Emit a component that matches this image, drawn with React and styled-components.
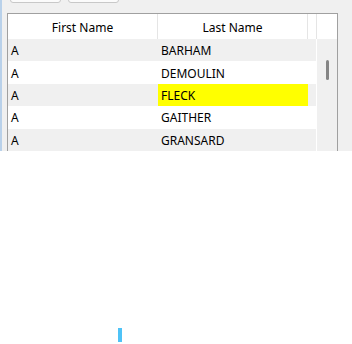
import styled, { createGlobalStyle } from "styled-components";

const GlobalStyle = createGlobalStyle`
  html, body {
    margin: 0;
    padding: 0;
    background: #ffffff;
  }
  body {
    font-family: "Noto Sans", "Open Sans", sans-serif;
    font-size: 12px;
    color: #000;
  }
`

const Panel = styled.div`
  height: 151px;
  background: #f0f0f0;
  border-left: 2px solid #b9d1ea;
  padding-left: 5px;
  box-sizing: border-box;
  display: flex;
  flex-direction: column;
  overflow: hidden;
`

const Toolbar = styled.div`
  height: 13px;
  display: flex;
  align-items: flex-end;
  gap: 7px;
  padding-left: 3px;
  overflow: hidden;
  flex-shrink: 0;
`

const ToolButton = styled.div`
  width: 51px;
  height: 23px;
  margin-bottom: 10px;
  box-sizing: border-box;
  border: 1px solid #c8c8c8;
  border-radius: 3px;
  background: #fbfbfb;
  flex-shrink: 0;
`

const Grid = styled.div`
  width: 331px;
  flex: 1;
  box-sizing: border-box;
  border: 1px solid #a0a0a0;
  border-bottom: none;
  background: #ffffff;
  display: flex;
  flex-direction: column;
  overflow: hidden;
`

const HeaderRow = styled.div`
  height: 25px;
  display: flex;
  background: #ffffff;
  flex-shrink: 0;
`

const HeaderCell = styled.div`
  width: ${(p) => p.$w}px;
  box-sizing: border-box;
  border-right: 1px solid ${(p) => (p.$last ? "transparent" : "#e5e5e5")};
  display: flex;
  align-items: center;
  justify-content: center;
  white-space: nowrap;
  padding-top: 1px;
`

const Body = styled.div`
  display: flex;
  flex: 1;
`

const Rows = styled.div`
  width: 308px;
  display: flex;
  flex-direction: column;
  border-right: 1px solid #ffffff;
`

const Row = styled.div`
  height: 22.4px;
  display: flex;
  flex-shrink: 0;
  background: ${(p) => (p.$alt ? "#f0f0f0" : "#ffffff")};
`

const Cell = styled.div`
  width: ${(p) => p.$w}px;
  box-sizing: border-box;
  padding: 1px 0 0 3px;
  display: flex;
  align-items: center;
  white-space: nowrap;
  background: ${(p) => (p.$highlight ? "#ffff00" : "transparent")};
`

const ScrollTrack = styled.div`
  width: 20px;
  background: #f0f0f0;
  display: flex;
  justify-content: center;
  padding-top: 21px;
  box-sizing: border-box;
`

const ScrollThumb = styled.div`
  width: 3px;
  height: 20px;
  border-radius: 1.5px;
  background: #858585;
`

const Below = styled.div`
  height: 193px;
  padding: 177px 0 0 118px;
  box-sizing: border-box;
`

const Caret = styled.div`
  width: 4px;
  height: 14px;
  background: #4fc3f7;
`

const people = [
  { first: "A", last: "BARHAM" },
  { first: "A", last: "DEMOULIN" },
  { first: "A", last: "FLECK", highlight: true },
  { first: "A", last: "GAITHER" },
  { first: "A", last: "GRANSARD" },
]

export default function App() {
  return (
    <>
      <GlobalStyle />
      <Panel>
        <Toolbar>
          <ToolButton />
          <ToolButton />
        </Toolbar>
        <Grid>
          <HeaderRow>
            <HeaderCell $w={150}>First Name</HeaderCell>
            <HeaderCell $w={150}>Last Name</HeaderCell>
            <HeaderCell $w={9} />
            <HeaderCell $w={20} $last />
          </HeaderRow>
          <Body>
            <Rows>
              {people.map((p, i) => (
                <Row key={i} $alt={i % 2 === 0}>
                  <Cell $w={150}>{p.first}</Cell>
                  <Cell $w={150} $highlight={p.highlight}>{p.last}</Cell>
                </Row>
              ))}
            </Rows>
            <ScrollTrack>
              <ScrollThumb />
            </ScrollTrack>
          </Body>
        </Grid>
      </Panel>
      <Below>
        <Caret />
      </Below>
    </>
  )
}
